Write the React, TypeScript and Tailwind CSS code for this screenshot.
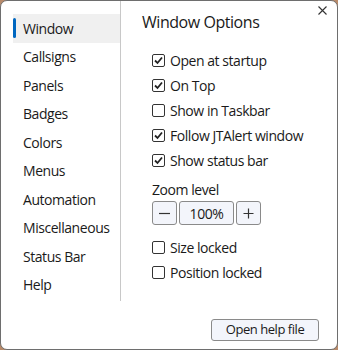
import { useState } from "react";

const navItems = [
  "Window",
  "Callsigns",
  "Panels",
  "Badges",
  "Colors",
  "Menus",
  "Automation",
  "Miscellaneous",
  "Status Bar",
  "Help",
];

const Check = ({ checked, label }: { checked: boolean; label: string }) => (
  <label className="flex items-center h-[25px] gap-[5px]">
    <span className="w-[13px] h-[13px] border border-[#333] rounded-[2px] bg-white flex items-center justify-center">
      {checked && (
        <svg width="11" height="11" viewBox="0 0 11 11">
          <path d="M2 5.5 L4.5 8 L9 2.5" stroke="#222" strokeWidth="1.8" fill="none" />
        </svg>
      )}
    </span>
    <span>{label}</span>
  </label>
);

const App = () => {
  const [selected] = useState("Window");

  return (
    <div className="w-[338px] h-[350px] bg-[#b88a6a]">
      <div
        className="relative w-[338px] h-[350px] bg-white border border-[#6e6e6e] rounded-[7px] flex text-[14px] tracking-[-0.45px] text-[#1a1a1a]"
        style={{ fontFamily: '"Segoe UI", "Open Sans", "Noto Sans", sans-serif' }}
      >
        <button className="absolute right-[10px] top-[5px]">
          <svg width="9" height="9" viewBox="0 0 9 9">
            <path d="M0.5 0.5 L8.5 8.5 M8.5 0.5 L0.5 8.5" stroke="#333" strokeWidth="1.1" />
          </svg>
        </button>

        {/* Nav */}
        <div className="w-[120px] pt-[13px] border-r border-[#c8c8c8] mb-[48px] shrink-0">
          {navItems.map((item) => (
            <div
              key={item}
              className={`relative h-[28.5px] flex items-center pl-[22px] ml-[12px] ${
                item === selected ? "bg-[#f0f0f0]" : ""
              }`}
            >
              {item === selected && (
                <span className="absolute left-0 top-[4px] w-[3px] h-[20px] rounded-full bg-[#0067c0]" />
              )}
              <span className="-ml-[12px]">{item}</span>
            </div>
          ))}
        </div>

        {/* Content */}
        <div className="flex-1 pl-[21px] pt-[9px] flex flex-col">
          <h1 className="text-[16px] h-[24px]">Window Options</h1>
          <div className="pl-[10px] pt-[14px]">
            <Check checked label="Open at startup" />
            <Check checked label="On Top" />
            <Check checked={false} label="Show in Taskbar" />
            <Check checked label="Follow JTAlert window" />
            <Check checked label="Show status bar" />
            <div className="mt-[6px] h-[22px]">Zoom level</div>
            <div className="flex gap-[2px] h-[24px]">
              <button className="w-[25px] border border-[#8a8a8a] rounded-[3px] bg-[#f3f5fb] flex items-center justify-center">
                <svg width="11" height="11" viewBox="0 0 11 11">
                  <path d="M0 5.5 H11" stroke="#333" strokeWidth="1.2" />
                </svg>
              </button>
              <div className="w-[55px] border border-[#8a8a8a] rounded-[3px] bg-[#f3f5fb] flex items-center justify-center">100%</div>
              <button className="w-[25px] border border-[#8a8a8a] rounded-[3px] bg-[#f3f5fb] flex items-center justify-center">
                <svg width="11" height="11" viewBox="0 0 11 11">
                  <path d="M0.5 5.5 H10.5 M5.5 0.5 V10.5" stroke="#333" strokeWidth="1.2" />
                </svg>
              </button>
            </div>
            <div className="mt-[10px]">
              <Check checked={false} label="Size locked" />
              <Check checked={false} label="Position locked" />
            </div>
          </div>
          <div className="mt-auto mb-[8px] mr-[18px] flex justify-end">
            <button className="w-[108px] h-[22px] border border-[#8a8a8a] rounded-[3px] bg-[#f3f5fb] text-[13px]">
              Open help file
            </button>
          </div>
        </div>
      </div>
    </div>
  );
};

export default App;
